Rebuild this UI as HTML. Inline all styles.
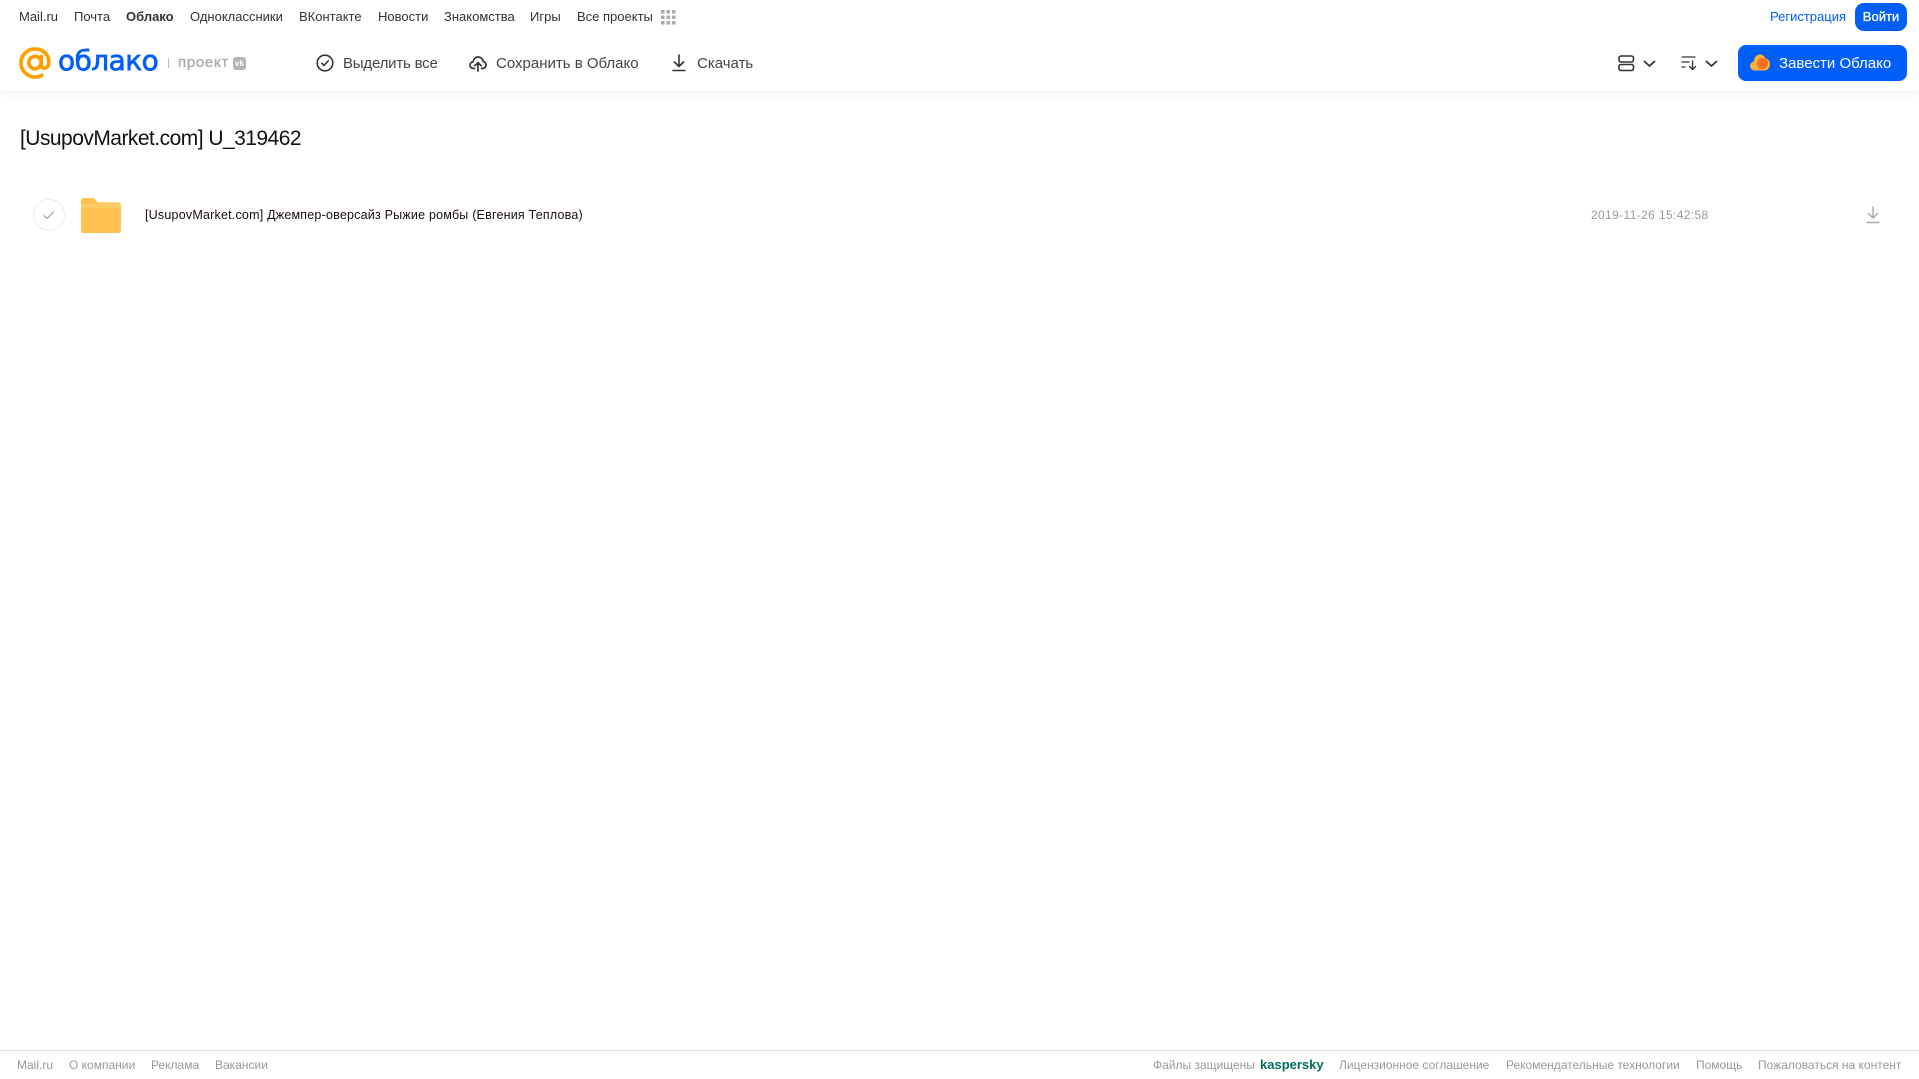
<!DOCTYPE html>
<html lang="ru"><head><meta charset="utf-8"><title>Облако</title>
<style>
html,body{margin:0;padding:0;background:#fff;width:1919px;height:1079px;overflow:hidden;font-family:"Liberation Sans",Arial,sans-serif}
.a{position:absolute;white-space:nowrap;line-height:1}
.n{font-size:13px;color:#333;top:10px}
.t{font-size:15px;color:#444;top:56px}
.f{font-size:12px;color:#999;top:1059px}
svg{position:absolute;overflow:visible}
</style></head><body>
<div class="a" style="left:0;top:0;width:1919px;height:91px;background:#fff;box-shadow:0 2px 8px rgba(0,0,0,.07)"></div>

<span class="a n" style="left:19px">Mail.ru</span>
<span class="a n" style="left:74px">Почта</span>
<span class="a n" style="left:126px;font-weight:bold">Облако</span>
<span class="a n" style="left:190px">Одноклассники</span>
<span class="a n" style="left:299px">ВКонтакте</span>
<span class="a n" style="left:378px">Новости</span>
<span class="a n" style="left:444px">Знакомства</span>
<span class="a n" style="left:530px">Игры</span>
<span class="a n" style="left:577px">Все проекты</span>
<svg style="left:661px;top:10px" width="15" height="15" fill="#aaa"><rect x="0" y="0" width="3.6" height="3.6" rx=".8"/><rect x="5.5" y="0" width="3.6" height="3.6" rx=".8"/><rect x="11" y="0" width="3.6" height="3.6" rx=".8"/><rect x="0" y="5.5" width="3.6" height="3.6" rx=".8"/><rect x="5.5" y="5.5" width="3.6" height="3.6" rx=".8"/><rect x="11" y="5.5" width="3.6" height="3.6" rx=".8"/><rect x="0" y="11" width="3.6" height="3.6" rx=".8"/><rect x="5.5" y="11" width="3.6" height="3.6" rx=".8"/><rect x="11" y="11" width="3.6" height="3.6" rx=".8"/></svg>

<span class="a n" style="left:1770px;color:#005ff9">Регистрация</span>
<div class="a" style="left:1855px;top:3px;width:52px;height:28px;border-radius:9px;background:#005ff9;color:#fff;font-size:13px;-webkit-text-stroke:.3px #fff;line-height:27px;text-align:center">Войти</div>

<svg style="left:19px;top:47px" width="32" height="32" viewBox="0 0 33 33" fill="none" stroke="#ff9e00" stroke-width="3.8" stroke-linecap="round"><circle cx="16.5" cy="16" r="6.4"/><path d="M22.9 9.8v8.4c0 5 6.8 4.8 7.7-.6C32 9 25.500 2 16.500 2 8.500 2 2 8.500 2 16.400S8.500 31 16.500 31c2.800 0 5-.6 7-1.800"/></svg>
<span class="a" style="left:58px;top:47px;font-family:'DejaVu Sans',sans-serif;font-size:28px;color:#005ff9;-webkit-text-stroke:.7px #005ff9;letter-spacing:-.55px">облако</span>
<div class="a" style="left:168px;top:58px;width:1px;height:10px;background:#bbb"></div>
<span class="a" style="left:178px;top:55px;font-size:15px;color:#aaa;-webkit-text-stroke:.35px #aaa;letter-spacing:.7px">проект</span>
<div class="a" style="left:233px;top:57px;width:13px;height:13px;border-radius:3px;background:#b5b5b5;color:#fff;font-size:8px;font-weight:bold;line-height:13px;text-align:center">vk</div>

<svg style="left:316px;top:54px" width="18" height="18" viewBox="0 0 18 18" fill="none" stroke="#333" stroke-width="1.6" stroke-linecap="round" stroke-linejoin="round"><circle cx="9" cy="9" r="7.8"/><path d="M5.8 9.2l2.2 2.2 4.2-4.4"/></svg>
<span class="a t" style="left:343px;letter-spacing:-.2px">Выделить все</span>
<svg style="left:469px;top:54px" width="18" height="18" viewBox="0 0 18 18" fill="none" stroke="#333" stroke-width="1.7" stroke-linecap="round" stroke-linejoin="round"><path d="M5.5 14.5H4.4C2.4 14.5 1 13 1 11.2c0-1.8 1.3-3.1 3-3.3C4.500 5 6.600 3 9.200 3c2.600 0 4.600 1.900 5 4.500 1.600.3 2.800 1.700 2.800 3.500 0 1.900-1.400 3.500-3.400 3.500h-1"/><path d="M9 17V9M5.800 11.800L9 8.600l3.200 3.200"/></svg>
<span class="a t" style="left:496px">Сохранить в Облако</span>
<svg style="left:671px;top:54px" width="16" height="18" viewBox="0 0 16 18" fill="none" stroke="#333" stroke-width="1.6" stroke-linecap="round" stroke-linejoin="round"><path d="M8 1v11M3.500 8L8 12.500 12.500 8"/><path d="M2 16.500h12"/></svg>
<span class="a t" style="left:697px">Скачать</span>

<svg style="left:1618px;top:55px" width="17" height="17" viewBox="0 0 17 17" fill="none" stroke="#333" stroke-width="1.6"><rect x="1" y="1" width="14.500" height="6" rx="2"/><rect x="1" y="9.500" width="14.500" height="6" rx="2"/></svg>
<svg style="left:1643px;top:60px" width="13" height="8" viewBox="0 0 13 8" fill="none" stroke="#333" stroke-width="1.800" stroke-linecap="round" stroke-linejoin="round"><path d="M1.500 1.500L6.500 6l5-4.500"/></svg>
<svg style="left:1681px;top:55px" width="17" height="17" viewBox="0 0 17 17" fill="none" stroke="#333" stroke-width="1.300" stroke-linecap="round" stroke-linejoin="round"><path d="M1 2h13M1 7h7M1 12h3"/><path d="M11.500 6v8.500M8.500 11.500l3 3 3-3"/></svg>
<svg style="left:1705px;top:60px" width="13" height="8" viewBox="0 0 13 8" fill="none" stroke="#333" stroke-width="1.800" stroke-linecap="round" stroke-linejoin="round"><path d="M1.500 1.500L6.500 6l5-4.500"/></svg>

<div class="a" style="left:1738px;top:45px;width:169px;height:36px;border-radius:8px;background:#005ff9"></div>
<svg style="left:1750px;top:54px" width="20" height="17" viewBox="0 0 20 17"><path d="M5 16.500C2 16.500 0 14.500 0 12c0-2.300 1.500-4 3.600-4.300C4.200 3.300 6.700.5 9.800.5c2.700 0 4.800 1.600 5.700 4 2.600.3 4.500 2.700 4.500 5.600 0 3.600-2.500 6.400-5.800 6.400z" fill="#ffb03a"/><circle cx="12.500" cy="9.500" r="5.500" fill="#f2701f"/></svg>
<span class="a" style="left:1779px;top:56px;font-size:15px;color:#fff">Завести Облако</span>

<span class="a" style="left:20px;top:128px;font-size:21px;color:#111;letter-spacing:-.53px">[UsupovMarket.com] U_319462</span>

<div class="a" style="left:33px;top:199px;width:30px;height:30px;border:1px solid #ececec;border-radius:50%"></div>
<svg style="left:43px;top:211px" width="12" height="9" viewBox="0 0 12 9" fill="none" stroke="#aaa" stroke-width="1.300" stroke-linecap="round" stroke-linejoin="round"><path d="M1 4.500l3 3L10.500 1"/></svg>
<svg style="left:81px;top:198px" width="40" height="35" viewBox="0 0 41 36"><path d="M3 0h8c2 0 3 .8 4 2l2 2.500h21c1.700 0 3 1.300 3 3V33c0 1.700-1.300 3-3 3H3c-1.700 0-3-1.300-3-3V3C0 1.300 1.300 0 3 0z" fill="#ffc14d"/><path d="M0 8.500c0-1.700 1.300-3 3-3h35c1.700 0 3 1.300 3 3V10H0z" fill="#ffcf70" opacity=".7"/></svg>
<span class="a" style="left:145px;top:209px;font-size:12.500px;color:#1a0a1a;letter-spacing:.21px">[UsupovMarket.com] Джемпер-оверсайз Рыжие ромбы (Евгения Теплова)</span>
<span class="a" style="left:1591px;top:209px;font-size:12px;color:#999;letter-spacing:.37px">2019-11-26 15:42:58</span>
<svg style="left:1866px;top:206px" width="14" height="18" viewBox="0 0 14 18" fill="none" stroke="#aaa" stroke-width="1.400" stroke-linecap="round" stroke-linejoin="round"><path d="M7 1v11M2.500 7.500L7 12l4.500-4.500"/><path d="M1 16.500h12"/></svg>

<div class="a" style="left:0;top:1050px;width:1919px;height:1px;background:#ddd"></div>
<span class="a f" style="left:17px">Mail.ru</span>
<span class="a f" style="left:69px">О компании</span>
<span class="a f" style="left:151px">Реклама</span>
<span class="a f" style="left:215px">Вакансии</span>
<span class="a f" style="left:1153px">Файлы защищены</span>
<span class="a" style="left:1260px;top:1058px;font-size:13px;font-weight:bold;color:#00705a">kaspersky</span>
<span class="a f" style="left:1339px">Лицензионное соглашение</span>
<span class="a f" style="left:1506px">Рекомендательные технологии</span>
<span class="a f" style="left:1696px">Помощь</span>
<span class="a f" style="left:1758px">Пожаловаться на контент</span>
</body></html>
